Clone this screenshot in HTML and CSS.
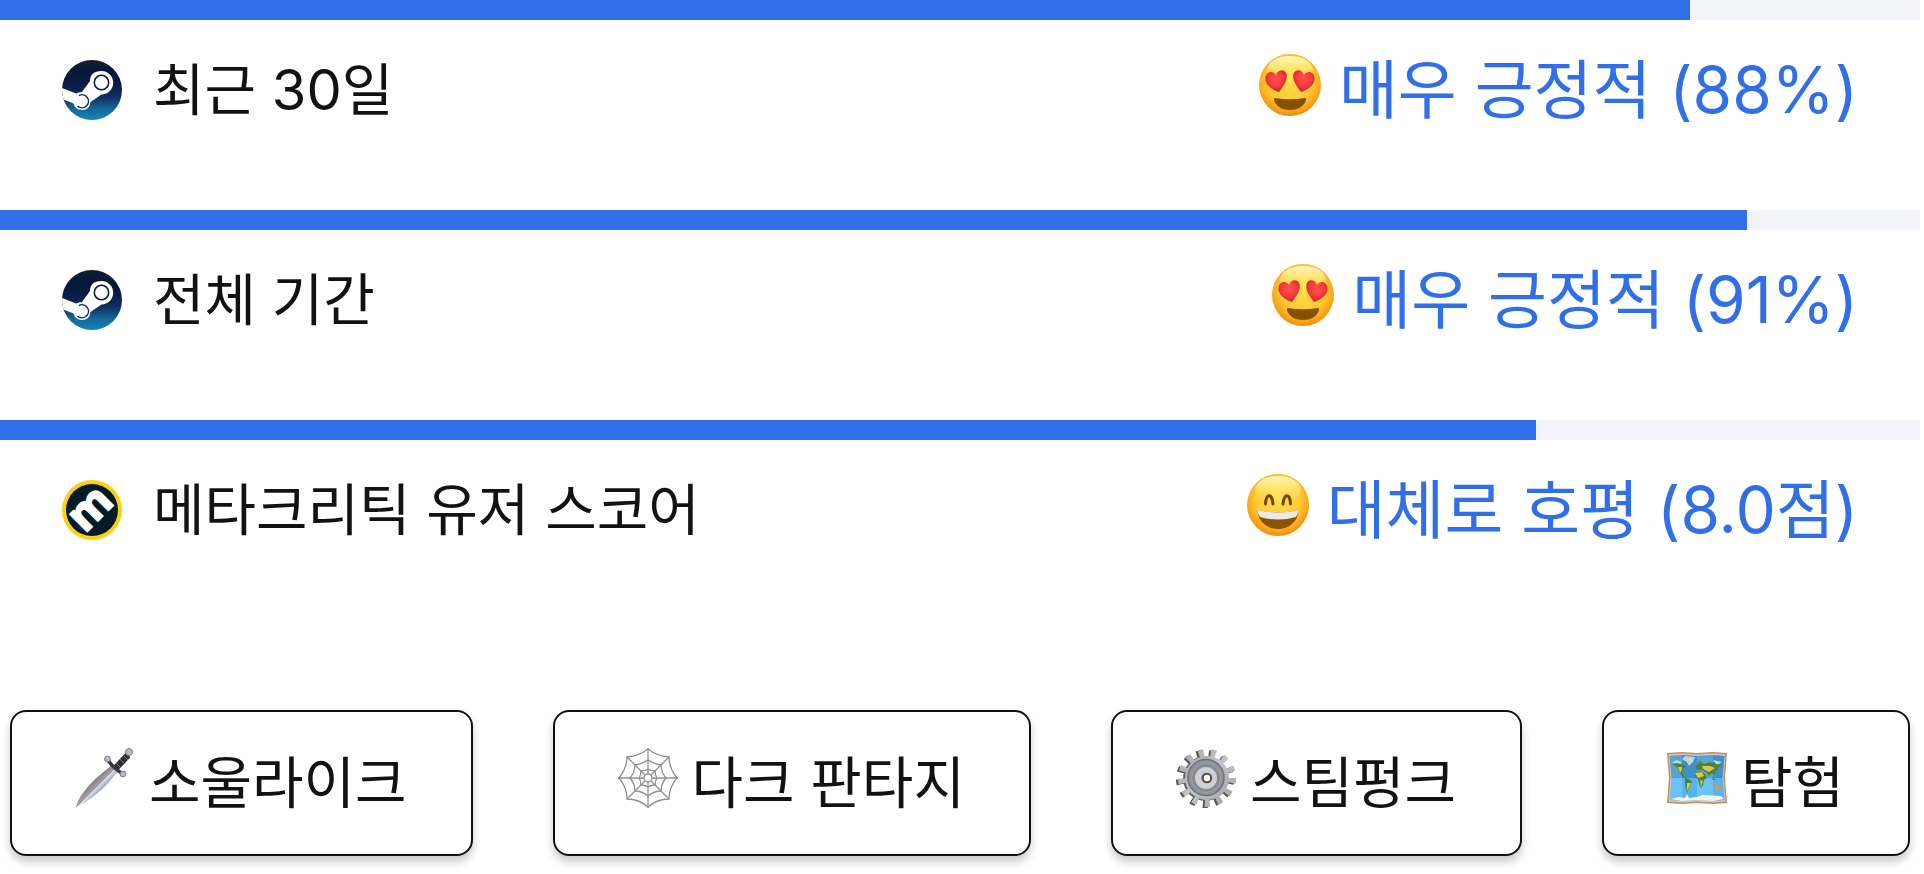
FILE: index.html
```html
<!DOCTYPE html>
<html lang="ko">
<head>
    <meta charset="UTF-8">
    <meta name="viewport" content="width=device-width, initial-scale=1.0">
    <title>게임 평가</title>
    <link rel="stylesheet" href="styles.css">
</head>
<body>
    <!-- Shared icon parts -->
    <svg class="defs" width="0" height="0" aria-hidden="true">
        <defs>
            <linearGradient id="steam-bg" x1="0" y1="0" x2="0" y2="1">
                <stop offset="0" stop-color="#111d2e"/>
                <stop offset="0.22" stop-color="#051839"/>
                <stop offset="0.42" stop-color="#0a1b48"/>
                <stop offset="0.62" stop-color="#132e62"/>
                <stop offset="0.82" stop-color="#146a9c"/>
                <stop offset="1" stop-color="#1387b8"/>
            </linearGradient>
            <radialGradient id="face" cx="0.5" cy="0.42" r="0.6">
                <stop offset="0" stop-color="#ffe04a"/>
                <stop offset="0.6" stop-color="#ffc934"/>
                <stop offset="0.83" stop-color="#f9a61a"/>
                <stop offset="1" stop-color="#e8860e"/>
            </radialGradient>
            <linearGradient id="shine" x1="0" y1="0" x2="0" y2="1">
                <stop offset="0" stop-color="#fffcc8" stop-opacity="0.95"/>
                <stop offset="1" stop-color="#ffee60" stop-opacity="0"/>
            </linearGradient>
            <radialGradient id="heart-fill" cx="0.5" cy="0.4" r="0.6">
                <stop offset="0" stop-color="#ff5350"/>
                <stop offset="0.6" stop-color="#f43a3c"/>
                <stop offset="1" stop-color="#c9202c"/>
            </radialGradient>
            <clipPath id="round"><circle cx="30" cy="30" r="30"/></clipPath>

            <symbol id="steam" viewBox="0 0 60 60">
                <g clip-path="url(#round)">
                    <rect width="60" height="60" fill="url(#steam-bg)"/>
                    <path d="M-1 27.500 L14 33.500 Q17 32 20 32 L28 21 Q28 11 39.500 11 A11.700 11.700 0 0 1 39.500 34.400 L28.500 42 Q27.500 50 20 50 Q13 50 11.500 43.500 L-1 38.500 Z" fill="#fff"/>
                    <circle cx="39.500" cy="22.500" r="7.200" fill="#fff" stroke="#0a1b48" stroke-width="1.600"/>
                    <path d="M17 35.500 A6.500 6.500 0 1 1 15.500 46" fill="none" stroke="#132e62" stroke-width="1.500"/>
                </g>
            </symbol>

            <symbol id="metacritic" viewBox="0 0 60 60">
                <circle cx="30" cy="30" r="30" fill="#ffd00f"/>
                <circle cx="30" cy="30" r="26" fill="#001b27"/>
                <text class="logo-letter" transform="translate(38 38.500) rotate(-45)" text-anchor="middle">m</text>
            </symbol>

            <symbol id="heart-eyes" viewBox="0 0 62 62">
                <circle cx="31" cy="31" r="31" fill="url(#face)"/>
                <ellipse cx="31" cy="16" rx="23" ry="14" fill="url(#shine)"/>
                <path d="M20 38 C12 35.500 6 30 6.500 24 C7 17.500 14 16 17 21 C18.500 15 26 14.500 27.500 20 C29 26 24.500 32 20 38 Z" fill="url(#heart-fill)"/>
                <path d="M42 38 C50 35.500 56 30 55.500 24 C55 17.500 48 16 45 21 C43.500 15 36 14.500 34.500 20 C33 26 37.500 32 42 38 Z" fill="url(#heart-fill)"/>
                <path d="M16 44 Q31 46.500 46 44 Q47.500 44 47 46 C45 53 38 56 31 56 C24 56 17 53 15 46 Q14.500 44 16 44 Z" fill="#855200"/>
            </symbol>

            <symbol id="grin" viewBox="0 0 62 62">
                <circle cx="31" cy="31" r="31" fill="url(#face)"/>
                <ellipse cx="31" cy="16" rx="23" ry="14" fill="url(#shine)"/>
                <path d="M18.500 30 C19 19 25 19 26 30 M36 30 C37 19 43 19 43.500 30" fill="none" stroke="#7a4400" stroke-width="3" stroke-linecap="round"/>
                <path d="M11 36 Q31 41 51 36 C52 47 42 55 31 55 C20 55 10 47 11 36 Z" fill="#8a5300"/>
                <path d="M11 36 Q31 41 51 36 Q51.500 40 49 43 Q31 48 13 43 Q10.500 40 11 36 Z" fill="#eceae8"/>
            </symbol>

            <linearGradient id="blade" x1="0.350" y1="0.350" x2="0.650" y2="0.650">
                <stop offset="0" stop-color="#7c6f73"/>
                <stop offset="0.450" stop-color="#a19ba3"/>
                <stop offset="0.550" stop-color="#d3e3ee"/>
                <stop offset="1" stop-color="#737b84"/>
            </linearGradient>
            <symbol id="dagger" viewBox="0 0 60 60">
                <path d="M1 59 C4 47 15 34 37 17 L43 23 C28 43 14 53 1 59 Z" fill="url(#blade)"/>
                <path d="M1 59 L40 20" stroke="#8e8e96" stroke-width="1"/>
                <path d="M40 21 L53 7" stroke="#2c2e33" stroke-width="6.500"/>
                <path d="M41 15 L46 20 M45 11 L50 16 M49 8 L53 12" stroke="#767b82" stroke-width="1"/>
                <path d="M33 12 Q38 20 48 26" fill="none" stroke="#36383d" stroke-width="3.500"/>
                <g fill="#b5bdc9" stroke="#747b88" stroke-width="1">
                    <circle cx="32.500" cy="11" r="2.900"/>
                    <circle cx="48" cy="26" r="2.900"/>
                    <circle cx="54" cy="4" r="3.500"/>
                </g>
            </symbol>

            <symbol id="web" viewBox="0 0 60 60">
                <g fill="none" stroke="#8f8f8f" stroke-width="1.300">
                    <path d="M30 0 V26 M30 34 V60 M0 30 H26 M34 30 H60 M9 9 L27 27 M33 33 L51 51 M51 9 L33 27 M27 33 L9 51"/>
                    <path d="M30 1 Q39 8 51 9 Q51 20 59 30 Q51 39 51 51 Q39 51 30 59 Q21 51 9 51 Q9 39 1 30 Q9 20 9 9 Q21 8 30 1 Z"/>
                    <path d="M30 12 Q36 16 43 17 Q43 24 48 30 Q43 36 43 43 Q36 43 30 48 Q24 43 17 43 Q17 36 12 30 Q17 24 17 17 Q24 16 30 12 Z"/>
                    <path d="M30 21 Q33 23 37 23 Q37 27 39 30 Q37 33 37 37 Q33 37 30 39 Q27 37 23 37 Q23 33 21 30 Q23 27 23 23 Q27 23 30 21 Z"/>
                    <circle cx="30" cy="30" r="4"/>
                </g>
            </symbol>

            <linearGradient id="metal" x1="0" y1="0" x2="1" y2="1">
                <stop offset="0" stop-color="#a9adb3"/>
                <stop offset="0.5" stop-color="#c0c4ca"/>
                <stop offset="1" stop-color="#a1a5ac"/>
            </linearGradient>
            <symbol id="gear" viewBox="0 0 60 60">
                <circle cx="29" cy="31" r="25" fill="none" stroke="#5c5350" stroke-width="8" stroke-dasharray="5 7.083"/>
                <circle cx="29.500" cy="30.500" r="22.500" fill="#67605f"/>
                <circle cx="31" cy="30" r="25" fill="none" stroke="url(#metal)" stroke-width="8" stroke-dasharray="5 7.083"/>
                <circle cx="31" cy="30" r="22" fill="url(#metal)"/>
                <circle cx="30" cy="29.500" r="18" fill="#90959d" stroke="#6d7179" stroke-width="1.500"/>
                <circle cx="30" cy="30" r="14.500" fill="#858a92" stroke="#9ea2a9" stroke-width="1"/>
                <circle cx="30" cy="30" r="8" fill="#9a9da3" stroke="#cdd0d5" stroke-width="6"/>
                <circle cx="31" cy="30" r="4.200" fill="#fff" stroke="#564c48" stroke-width="2"/>
            </symbol>

            <symbol id="map" viewBox="0 0 60 60">
                <path d="M0 5 L15 4 L30 5 L46 4 L60 5 L58 30 L60 55 L46 56 L30 55 L15 56 L0 55 L2 30 Z" fill="#c88a58"/>
                <path d="M1.500 6.500 L15 5.500 L30 6.500 L46 5.500 L58.500 6.500 L56.500 30 L58.500 53.500 L46 54.500 L30 53.500 L15 54.500 L1.500 53.500 L3.500 30 Z" fill="#d5c9c0"/>
                <path d="M2.500 8 L15 7 L30 8 L46 7 L57.500 8 L55.500 30 L57.500 52 L46 53 L30 52 L15 53 L2.500 52 L4.500 30 Z" fill="#6ac3f7"/>
                <path d="M15 7 L30 8 V30 H15 Z M46 7 L57.500 8 L55.500 30 H46 Z" fill="#3f90c4"/>
                <path d="M2.500 8 L15 7 V30 H4.500 Z M30 8 L46 7 V30 H30 Z" fill="#55a5d6"/>
                <path d="M15 30 H30 V52 L15 53 Z M46 30 H55.500 L57.500 52 L46 53 Z" fill="#5ab3ea"/>
                <path d="M4 51 L12 49 L18 50 L20 46 L22 50 L30 49 L36 47 L54 48 L57 51 L46 53 L30 52 L15 53 Z" fill="#f1f5f8"/>
                <path d="M18 8 L28 9 L26 14 L22 18 L20 14 L15 11 Z M5 15 L9 12 L15 14 L12 17 Z M46 12 L55 14 L50 17 Z" fill="#c2d4dd"/>
                <path d="M5 16 L10 15 L17 17 L19 19 L16 21 L15 25 L17 28 L20 30 L16 29 L12 24 L10 19 Z M29 18 L33 13 L37 16 L43 14 L49 16 L55 17 L52 19 L49 23 L47 27 L45 25 L42 28 L39 24 L35 22 L30 22 Z M28 24 L34 23 L38 26 L40 30 L37 32 L36 37 L34 40 L32 36 L31 31 L28 29 Z M18 30 L22 31 L25 34 L23 38 L20 45 L18 37 Z M45 29 L49 32 L46 32 Z" fill="#4c8432"/>
                <path d="M11 19 L15 19 L15 22 L13 25 Z M35 18 L43 18 L48 20 L42 24 L36 21 Z M28 25 L35 24 L37 28 L31 30 Z M20 35 L24 35 L20 43 Z M33 32 L36 33 L34 39 Z" fill="#e6c348"/>
                <path d="M47 38 L50 36 L53 38 L52 42 L48 41 Z" fill="#e8953a"/>
            </symbol>
        </defs>
    </svg>

    <!-- Review scores -->
    <section class="reviews">
        <div class="review">
            <div class="bar"><div class="bar-fill" style="width: 88%"></div></div>
            <div class="review-row">
                <div class="source">
                    <svg class="source-icon" aria-hidden="true"><use href="#steam"/></svg>
                    <span>최근 30일</span>
                </div>
                <div class="score">
                    <svg class="emoji" aria-hidden="true"><use href="#heart-eyes"/></svg>
                    <span>매우 긍정적 (88%)</span>
                </div>
            </div>
        </div>
        <div class="review">
            <div class="bar"><div class="bar-fill" style="width: 91%"></div></div>
            <div class="review-row">
                <div class="source">
                    <svg class="source-icon" aria-hidden="true"><use href="#steam"/></svg>
                    <span>전체 기간</span>
                </div>
                <div class="score">
                    <svg class="emoji" aria-hidden="true"><use href="#heart-eyes"/></svg>
                    <span>매우 긍정적 (91%)</span>
                </div>
            </div>
        </div>
        <div class="review">
            <div class="bar"><div class="bar-fill" style="width: 80%"></div></div>
            <div class="review-row">
                <div class="source">
                    <svg class="source-icon" aria-hidden="true"><use href="#metacritic"/></svg>
                    <span>메타크리틱 유저 스코어</span>
                </div>
                <div class="score">
                    <svg class="emoji" aria-hidden="true"><use href="#grin"/></svg>
                    <span>대체로 호평 (8.0점)</span>
                </div>
            </div>
        </div>
    </section>

    <!-- Tags -->
    <ul class="tags">
        <li class="tag"><svg class="tag-icon" aria-hidden="true"><use href="#dagger"/></svg><span>소울라이크</span></li>
        <li class="tag"><svg class="tag-icon" aria-hidden="true"><use href="#web"/></svg><span>다크 판타지</span></li>
        <li class="tag"><svg class="tag-icon" aria-hidden="true"><use href="#gear"/></svg><span>스팀펑크</span></li>
        <li class="tag"><svg class="tag-icon" aria-hidden="true"><use href="#map"/></svg><span>탐험</span></li>
    </ul>
</body>
</html>
```
FILE: styles.css
```css
* {
    margin: 0;
    padding: 0;
    box-sizing: border-box;
}

body {
    background-color: #fff;
    color: #121212;
    font-family: Inter, "Noto Sans CJK KR", sans-serif;
    font-size: 56px;
    line-height: 80px;
    white-space: nowrap;
}

svg {
    flex: none;
}

.defs {
    position: absolute;
}

.logo-letter {
    font-family: "Open Sans", sans-serif;
    font-size: 44px;
    font-weight: bold;
    fill: #fff;
    stroke: #fff;
    stroke-width: 2px;
}

/* Review scores */
.reviews {
    padding-right: 4px;
}

.review {
    padding-bottom: 50px;
}

.bar {
    height: 20px;
    background-color: #f3f4fa;
}

.bar-fill {
    height: 100%;
    background-color: #306fe8;
}

.review-row {
    display: flex;
    justify-content: space-between;
    align-items: center;
    height: 140px;
    padding: 0 62px;
}

.source,
.score {
    display: flex;
    align-items: center;
}

.source {
    gap: 31px;
}

.source-icon {
    width: 60px;
    height: 60px;
}

.score {
    gap: 18px;
    color: #306fe8;
    font-size: 64px;
}

.emoji {
    width: 62px;
    height: 62px;
    margin-bottom: 10px;
}

/* Tags */
.tags {
    display: flex;
    justify-content: space-between;
    padding: 80px 14px 18px 10px;
    list-style: none;
}

.tag {
    display: flex;
    align-items: center;
    gap: 14px;
    padding: 31px 64px 31px 63px;
    border: 2px solid #121212;
    border-radius: 16px;
    box-shadow: 0 6px 8px rgba(0, 0, 0, 0.2);
}

.tag-icon {
    width: 60px;
    height: 60px;
    margin-bottom: 10px;
}
```
